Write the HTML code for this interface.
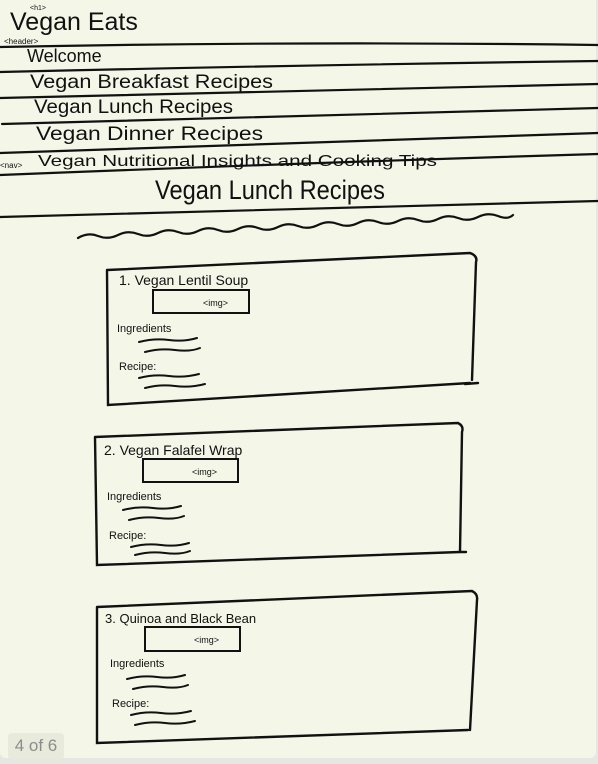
<!DOCTYPE html>
<html><head><meta charset="utf-8"><style>
html,body{margin:0;padding:0;background:#e6e7e0;width:598px;height:764px;overflow:hidden}
.card{position:absolute;left:0;top:0;width:596px;height:758px;background:#f4f6e8;border-radius:0 0 6px 6px}
svg{position:absolute;left:0;top:0}
text{font-family:"Liberation Sans",sans-serif;fill:#111}
.pg{position:absolute;left:8px;top:733px;width:56px;height:26px;background:#e8eadc;border-radius:4px;color:#8c8c8c;font:17px "Liberation Sans",sans-serif;line-height:26px;text-align:center}
</style></head><body>
<div class="card"></div>
<svg width="598" height="764" viewBox="0 0 598 764" fill="none" stroke="#111" stroke-width="2.4" stroke-linecap="round">
<g stroke-width="2.2">
<path d="M0 47 Q300 41 598 45"/>
<path d="M0 72 Q300 65 598 61"/>
<path d="M0 98 Q300 90 598 84"/>
<path d="M2 124 Q300 115 598 108"/>
<path d="M0 153 Q300 142 598 133"/>
<path d="M0 175 Q300 163 598 154"/>
<path d="M0 217 Q300 208 598 201"/>
<path d="M78 238 q10 -6 20 -2 t20 -1 t20 -1 t20 -1 t20 -1 t20 -1 t20 -1 t20 -1 t20 -1 t20 -1 t20 -1 t20 -1 t20 -1 t20 -1 t20 -1 t20 -1 t20 -1 t20 -1 t20 -1 t20 -1 t20 -1 t15 -1"/>
</g>
<g stroke="none">
<text x="10" y="30" font-size="25">Vegan Eats</text>
<text x="30" y="10" font-size="7">&lt;h1&gt;</text>
<text x="4" y="44" font-size="8">&lt;header&gt;</text>
<text x="27" y="62" font-size="18">Welcome</text>
<text x="30" y="88" font-size="19" textLength="243" lengthAdjust="spacingAndGlyphs">Vegan Breakfast Recipes</text>
<text x="34" y="113" font-size="19" textLength="199" lengthAdjust="spacingAndGlyphs">Vegan Lunch Recipes</text>
<text x="36" y="140" font-size="19" textLength="227" lengthAdjust="spacingAndGlyphs">Vegan Dinner Recipes</text>
<text x="0" y="168" font-size="8">&lt;nav&gt;</text>
<text x="38" y="166" font-size="16" textLength="399" lengthAdjust="spacingAndGlyphs">Vegan Nutritional Insights and Cooking Tips</text>
<text x="155" y="199" font-size="27" textLength="230" lengthAdjust="spacingAndGlyphs">Vegan Lunch Recipes</text>
</g>
<!-- box 1 -->
<path d="M107 270 L470 253 Q478 256 476 262 L472 380 M107 270 L108 405 L470 383 M465 384 L478 383"/>
<g transform="translate(107,270)">
<rect x="46" y="20" width="96" height="23" stroke-width="2"/>
<text x="96" y="36" font-size="9" stroke="none">&lt;img&gt;</text>
<text x="12" y="15" font-size="14" stroke="none">1. Vegan Lentil Soup</text>
<text x="10" y="62" font-size="11" stroke="none">Ingredients</text>
<path d="M32 72 q15 -4 30 -2 t28 -2 M38 82 q15 -4 30 -2 t25 -2" stroke-width="2"/>
<text x="12" y="100" font-size="11" stroke="none">Recipe:</text>
<path d="M32 108 q15 -4 30 -2 t30 -2 M38 118 q15 -4 30 -2 t30 -2" stroke-width="2"/>
</g>
<!-- box 2 -->
<path d="M95 437 L458 423 Q464 426 462 432 L460 552 M95 437 L97 565 L460 552 M458 552 L466 552"/>
<g transform="translate(95,437)">
<rect x="48" y="22" width="95" height="23" stroke-width="2"/>
<text x="97" y="38" font-size="9" stroke="none">&lt;img&gt;</text>
<text x="9" y="18" font-size="14" stroke="none">2. Vegan Falafel Wrap</text>
<text x="12" y="63" font-size="11" stroke="none">Ingredients</text>
<path d="M28 73 q15 -4 30 -2 t28 -2 M34 83 q15 -4 30 -2 t25 -2" stroke-width="2"/>
<text x="14" y="102" font-size="11" stroke="none">Recipe:</text>
<path d="M36 110 q15 -4 30 -2 t28 -2 M40 118 q15 -4 30 -2 t25 -2" stroke-width="2"/>
</g>
<!-- box 3 -->
<path d="M97 607 L472 591 Q478 594 477 600 L470 730 M97 607 L97 743 L468 730"/>
<g transform="translate(97,605)">
<rect x="48" y="22" width="95" height="24" stroke-width="2"/>
<text x="97" y="38" font-size="9" stroke="none">&lt;img&gt;</text>
<text x="8" y="18" font-size="13" stroke="none">3. Quinoa and Black Bean</text>
<text x="13" y="62" font-size="11" stroke="none">Ingredients</text>
<path d="M30 74 q15 -4 30 -2 t28 -2 M36 84 q15 -4 30 -2 t25 -2" stroke-width="2"/>
<text x="15" y="102" font-size="11" stroke="none">Recipe:</text>
<path d="M34 110 q15 -4 30 -2 t30 -2 M38 120 q15 -4 30 -2 t30 -2" stroke-width="2"/>
</g>
</svg>
<div class="pg">4 of 6</div>
</body></html>
